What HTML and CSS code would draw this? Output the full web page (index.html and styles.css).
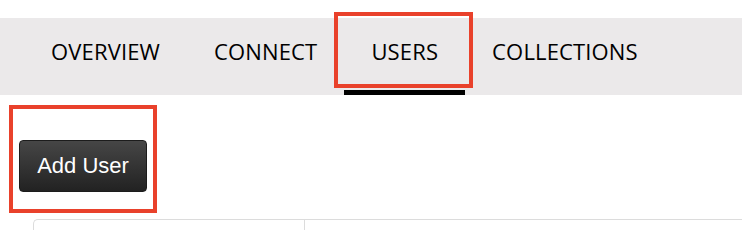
FILE: index.html
```html
<!DOCTYPE html>
<html>
<head>
<meta charset="utf-8">
<link rel="stylesheet" href="styles.css">
</head>
<body>
<nav class="tabs">
  <a class="tab">OVERVIEW</a>
  <a class="tab">CONNECT</a>
  <a class="tab tab-active">USERS<span class="mark mark-tab"></span></a>
  <a class="tab">COLLECTIONS</a>
</nav>
<section class="content">
  <div class="btn-wrap">
    <button class="btn">Add User</button>
    <span class="mark mark-btn"></span>
  </div>
  <div class="panel">
    <div class="panel-left"></div>
    <div class="panel-right"></div>
  </div>
</section>
</body>
</html>
```
FILE: styles.css
```css
html, body {
  margin: 0;
  padding: 0;
  background: #ffffff;
  overflow: hidden;
}
.tabs {
  margin-top: 18px;
  height: 77px;
  background: #ebe9ea;
  display: flex;
  padding-left: 24px;
  box-sizing: border-box;
}
.tab {
  position: relative;
  display: block;
  box-sizing: border-box;
  height: 77px;
  padding: 18px 27px 0;
  font-family: "Open Sans", sans-serif;
  font-size: 22px;
  letter-spacing: 0.15px;
  line-height: 30px;
  color: #000;
}
.tab-active {
  border-bottom: 5px solid #000;
}
.mark {
  position: absolute;
  border: 4px solid #e9412b;
  box-sizing: border-box;
}
.mark-tab {
  top: -6px;
  left: -10px;
  right: -8px;
  bottom: 2px;
}
.content {
  padding: 45px 0 0 19px;
}
.btn-wrap {
  position: relative;
  width: 128px;
}
.btn {
  display: block;
  width: 128px;
  height: 52px;
  padding: 0;
  background: linear-gradient(#464646, #222222);
  border: 1px solid #1c1c1c;
  border-radius: 4px;
  color: #ffffff;
  font-family: "Liberation Sans", Arial, sans-serif;
  font-size: 22px;
}
.mark-btn {
  top: -35px;
  left: -10px;
  right: -10px;
  bottom: -21px;
}
.panel {
  margin: 27px 0 0 14px;
  display: flex;
  height: 10px;
  border-top: 1px solid #dcdcdc;
  border-left: 1px solid #dcdcdc;
  border-top-left-radius: 5px;
}
.panel-left {
  width: 270px;
  border-right: 1px solid #dcdcdc;
}
.panel-right {
  flex: 1;
}
```
